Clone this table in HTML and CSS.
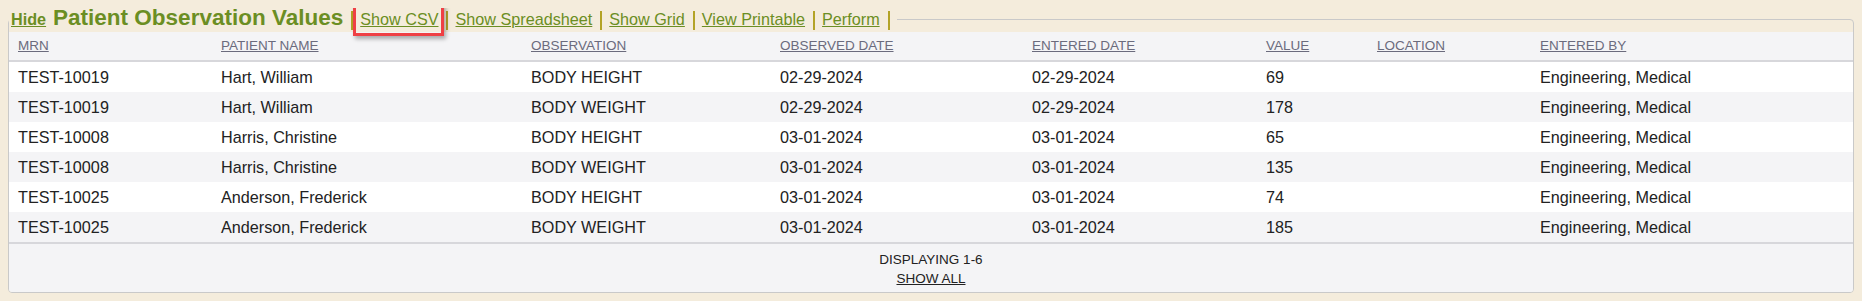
FILE: index.html
```html
<!DOCTYPE html>
<html>
<head>
<meta charset="utf-8">
<title>Patient Observation Values</title>
<link rel="stylesheet" href="styles.css">
</head>
<body>
<div class="stub"></div>
<div class="annotation"></div>
<fieldset class="panel">
<legend class="panel-legend"><a class="hide-link" href="#">Hide</a><span class="title">Patient Observation Values</span><span class="sep"></span><a class="action" href="#">Show CSV</a><span class="sep"></span><a class="action" href="#">Show Spreadsheet</a><span class="sep"></span><a class="action" href="#">Show Grid</a><span class="sep"></span><a class="action" href="#">View Printable</a><span class="sep"></span><a class="action" href="#">Perform</a><span class="sep"></span></legend>
<table class="grid">
<colgroup>
<col class="c-mrn"><col class="c-name"><col class="c-obs"><col class="c-odate"><col class="c-edate"><col class="c-value"><col class="c-loc"><col class="c-by">
</colgroup>
<thead>
<tr>
<th><a href="#">MRN</a></th>
<th><a href="#">PATIENT NAME</a></th>
<th><a href="#">OBSERVATION</a></th>
<th><a href="#">OBSERVED DATE</a></th>
<th><a href="#">ENTERED DATE</a></th>
<th><a href="#">VALUE</a></th>
<th><a href="#">LOCATION</a></th>
<th><a href="#">ENTERED BY</a></th>
</tr>
</thead>
<tbody>
<tr><td>TEST-10019</td><td>Hart, William</td><td>BODY HEIGHT</td><td>02-29-2024</td><td>02-29-2024</td><td>69</td><td></td><td>Engineering, Medical</td></tr>
<tr><td>TEST-10019</td><td>Hart, William</td><td>BODY WEIGHT</td><td>02-29-2024</td><td>02-29-2024</td><td>178</td><td></td><td>Engineering, Medical</td></tr>
<tr><td>TEST-10008</td><td>Harris, Christine</td><td>BODY HEIGHT</td><td>03-01-2024</td><td>03-01-2024</td><td>65</td><td></td><td>Engineering, Medical</td></tr>
<tr><td>TEST-10008</td><td>Harris, Christine</td><td>BODY WEIGHT</td><td>03-01-2024</td><td>03-01-2024</td><td>135</td><td></td><td>Engineering, Medical</td></tr>
<tr><td>TEST-10025</td><td>Anderson, Frederick</td><td>BODY HEIGHT</td><td>03-01-2024</td><td>03-01-2024</td><td>74</td><td></td><td>Engineering, Medical</td></tr>
<tr><td>TEST-10025</td><td>Anderson, Frederick</td><td>BODY WEIGHT</td><td>03-01-2024</td><td>03-01-2024</td><td>185</td><td></td><td>Engineering, Medical</td></tr>
</tbody>
</table>
<div class="grid-footer">
<div>DISPLAYING 1-6</div>
<div><a href="#">SHOW ALL</a></div>
</div>
</fieldset>
</body>
</html>
```
FILE: styles.css
```css
html, body {
  background: #f4ecdc;
}
body {
  margin: 8px;
  font-family: "Liberation Sans", Arial, sans-serif;
  color: #222;
  position: relative;
}
.stub {
  position: absolute;
  left: 887px;
  top: -28px;
  width: 70px;
  height: 20px;
  border: 1px solid #858585;
  border-radius: 4px;
}
.annotation {
  position: absolute;
  left: 345px;
  top: -5px;
  width: 91px;
  height: 33px;
  box-sizing: border-box;
  border: 3px solid #ef4044;
  box-shadow: 2px 3px 4px rgba(0, 0, 0, 0.3);
  z-index: 2;
}
.panel {
  margin: 0;
  padding: 2px 0 0;
  border: 1px solid #c9c9c9;
  border-radius: 4px;
  min-width: 0;
}
.panel-legend {
  padding: 0 0 0 2px;
  font-size: 16.2px;
  line-height: 20px;
  white-space: nowrap;
}
.hide-link {
  color: #6b8e23;
  font-weight: bold;
  font-size: 16.2px;
  text-decoration: underline;
  margin-right: 7px;
}
.title {
  color: #6b8e23;
  font-weight: bold;
  font-size: 22.5px;
}
.sep {
  display: inline-block;
  width: 2px;
  height: 19px;
  background: #b3a327;
  vertical-align: -5px;
  margin: 0 7px 0 8px;
}
.action {
  color: #6b8e23;
  text-decoration: underline;
}
.grid {
  width: 100%;
  border-collapse: collapse;
  table-layout: fixed;
}
.c-mrn { width: 203px; }
.c-name { width: 310px; }
.c-obs { width: 249px; }
.c-odate { width: 252px; }
.c-edate { width: 234px; }
.c-value { width: 111px; }
.c-loc { width: 163px; }
.c-by { width: auto; }
.grid th {
  background: #f4f4f6;
  text-align: left;
  font-weight: normal;
  font-size: 13.5px;
  line-height: 16px;
  padding: 6px 9px;
  border-bottom: 2px solid #d7d7db;
}
.grid th a {
  color: #6b6b7d;
  text-decoration: underline;
}
.grid td {
  font-size: 16.2px;
  line-height: 18px;
  padding: 6px 9px;
  background: #ffffff;
  white-space: nowrap;
}
.grid tbody tr:nth-child(even) td {
  background: #f4f4f6;
}
.grid tbody tr:last-child td {
  border-bottom: 2px solid #d7d7db;
}
.grid-footer {
  background: #f4f4f6;
  text-align: center;
  font-size: 13.5px;
  line-height: 18.5px;
  padding: 7px 0 4px;
  border-radius: 0 0 3px 3px;
  color: #222;
}
.grid-footer a {
  color: #222;
  text-decoration: underline;
}
```
